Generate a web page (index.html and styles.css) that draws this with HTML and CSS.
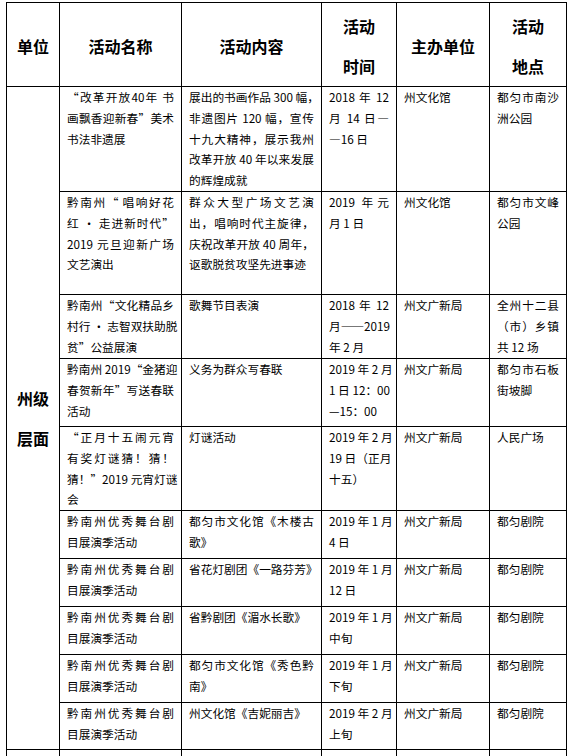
FILE: index.html
```html
<!DOCTYPE html>
<html lang="zh-CN">
<head>
<meta charset="utf-8">
<title>州级层面活动</title>
<link rel="stylesheet" href="styles.css">
</head>
<body>
<table class="grid">
  <colgroup>
    <col class="c-unit">
    <col class="c-name">
    <col class="c-desc">
    <col class="c-time">
    <col class="c-org">
    <col class="c-place">
  </colgroup>
  <thead>
    <tr class="h-head">
      <th>单位</th>
      <th>活动名称</th>
      <th>活动内容</th>
      <th>活动<br>时间</th>
      <th>主办单位</th>
      <th>活动<br>地点</th>
    </tr>
  </thead>
  <tbody>
    <tr class="h-105">
      <td class="unit" rowspan="10">州级<br>层面</td>
      <td><span class="ln fill">“改革开放40年 书</span><span class="ln fill">画飘香迎新春”美术</span><span class="ln">书法非遗展</span></td>
      <td><span class="ln fill">展出的书画作品 300 幅，</span><span class="ln fill">非遗图片 120 幅，宣传</span><span class="ln fill">十九大精神，展示我州</span><span class="ln fill">改革开放 40 年以来发展</span><span class="ln">的辉煌成就</span></td>
      <td><span class="ln fill">2018 年 12</span><span class="ln fill">月 14 日—</span><span class="ln">—16 日</span></td>
      <td>州文化馆</td>
      <td><span class="ln fill">都匀市南沙</span><span class="ln">洲公园</span></td>
    </tr>
    <tr class="h-103">
      <td><span class="ln fill">黔南州“ 唱响好花</span><span class="ln fill">红 · 走进新时代”</span><span class="ln fill">2019 元旦迎新广场</span><span class="ln">文艺演出</span></td>
      <td><span class="ln fill">群众大型广场文艺演</span><span class="ln fill">出，唱响时代主旋律，</span><span class="ln fill">庆祝改革开放 40 周年，</span><span class="ln">讴歌脱贫攻坚先进事迹</span></td>
      <td><span class="ln fill">2019 年元</span><span class="ln">月 1 日</span></td>
      <td>州文化馆</td>
      <td><span class="ln fill">都匀市文峰</span><span class="ln">公园</span></td>
    </tr>
    <tr class="h-64">
      <td><span class="ln fill">黔南州“文化精品乡</span><span class="ln fill">村行 · 志智双扶助脱</span><span class="ln">贫”公益展演</span></td>
      <td>歌舞节目表演</td>
      <td><span class="ln fill">2018 年 12</span><span class="ln fill">月——2019</span><span class="ln">年 2 月</span></td>
      <td>州文广新局</td>
      <td><span class="ln fill">全州十二县</span><span class="ln fill">（市）乡镇</span><span class="ln">共 12 场</span></td>
    </tr>
    <tr class="h-68">
      <td><span class="ln fill">黔南州 2019“金猪迎</span><span class="ln fill">春贺新年”写送春联</span><span class="ln">活动</span></td>
      <td>义务为群众写春联</td>
      <td><span class="ln fill">2019 年 2 月</span><span class="ln fill">1 日 12：00</span><span class="ln">—15：00</span></td>
      <td>州文广新局</td>
      <td><span class="ln fill">都匀市石板</span><span class="ln">街坡脚</span></td>
    </tr>
    <tr class="h-83">
      <td><span class="ln fill">“正月十五闹元宵</span><span class="ln fill">有奖灯谜猜！猜！</span><span class="ln fill">猜！”2019 元宵灯谜</span><span class="ln">会</span></td>
      <td>灯谜活动</td>
      <td><span class="ln fill">2019 年 2 月</span><span class="ln fill">19 日（正月</span><span class="ln">十五）</span></td>
      <td>州文广新局</td>
      <td>人民广场</td>
    </tr>
    <tr class="h-48">
      <td><span class="ln fill">黔南州优秀舞台剧</span><span class="ln">目展演季活动</span></td>
      <td><span class="ln fill">都匀市文化馆《木楼古</span><span class="ln">歌》</span></td>
      <td><span class="ln fill">2019 年 1 月</span><span class="ln">4 日</span></td>
      <td>州文广新局</td>
      <td>都匀剧院</td>
    </tr>
    <tr class="h-48">
      <td><span class="ln fill">黔南州优秀舞台剧</span><span class="ln">目展演季活动</span></td>
      <td><span class="ln fill">省花灯剧团《一路芬芳》</span></td>
      <td><span class="ln fill">2019 年 1 月</span><span class="ln">12 日</span></td>
      <td>州文广新局</td>
      <td>都匀剧院</td>
    </tr>
    <tr class="h-48">
      <td><span class="ln fill">黔南州优秀舞台剧</span><span class="ln">目展演季活动</span></td>
      <td><span class="ln">省黔剧团《湄水长歌》</span></td>
      <td><span class="ln fill">2019 年 1 月</span><span class="ln">中旬</span></td>
      <td>州文广新局</td>
      <td>都匀剧院</td>
    </tr>
    <tr class="h-48">
      <td><span class="ln fill">黔南州优秀舞台剧</span><span class="ln">目展演季活动</span></td>
      <td><span class="ln fill">都匀市文化馆《秀色黔</span><span class="ln">南》</span></td>
      <td><span class="ln fill">2019 年 1 月</span><span class="ln">下旬</span></td>
      <td>州文广新局</td>
      <td>都匀剧院</td>
    </tr>
    <tr class="h-47">
      <td><span class="ln fill">黔南州优秀舞台剧</span><span class="ln">目展演季活动</span></td>
      <td><span class="ln">州文化馆《吉妮丽吉》</span></td>
      <td><span class="ln fill">2019 年 2 月</span><span class="ln">上旬</span></td>
      <td>州文广新局</td>
      <td>都匀剧院</td>
    </tr>
    <tr class="h-tail">
      <td></td><td></td><td></td><td></td><td></td><td></td>
    </tr>
  </tbody>
</table>
</body>
</html>
```
FILE: styles.css
```css
html, body {
  margin: 0;
  background: #fff;
}
body {
  padding: 2px 0 0 6px;
  font-family: "Noto Sans CJK SC", "Noto Sans", sans-serif;
  color: #000;
}
.grid {
  border-collapse: collapse;
  table-layout: fixed;
  width: 561px;
}
.c-unit { width: 53px; }
.c-name { width: 122px; }
.c-desc { width: 140px; }
.c-time { width: 75px; }
.c-org { width: 93px; }
.c-place { width: 77px; }

.grid th,
.grid td {
  border: 1px solid #000;
  padding: 0 7px;
  vertical-align: top;
  text-align: left;
  font-size: 11.7px;
  line-height: 20.8px;
  font-weight: normal;
  overflow: hidden;
}
.grid th {
  font-size: 16px;
  font-weight: bold;
  line-height: 40px;
  text-align: center;
  vertical-align: middle;
  padding: 2px 2px 0;
}
.grid td.unit {
  font-size: 16px;
  font-weight: bold;
  line-height: 40px;
  text-align: center;
  vertical-align: middle;
  padding: 0 2px;
}
.ln {
  display: block;
  white-space: nowrap;
}
.fill {
  text-align: justify;
  text-align-last: justify;
}
.h-head { height: 84px; }
.h-105 { height: 105px; }
.h-103 { height: 103px; }
.h-64 { height: 64px; }
.h-68 { height: 68px; }
.h-83 { height: 83px; }
.h-48 { height: 48px; }
.h-47 { height: 47px; }
.h-tail { height: 30px; }
```
